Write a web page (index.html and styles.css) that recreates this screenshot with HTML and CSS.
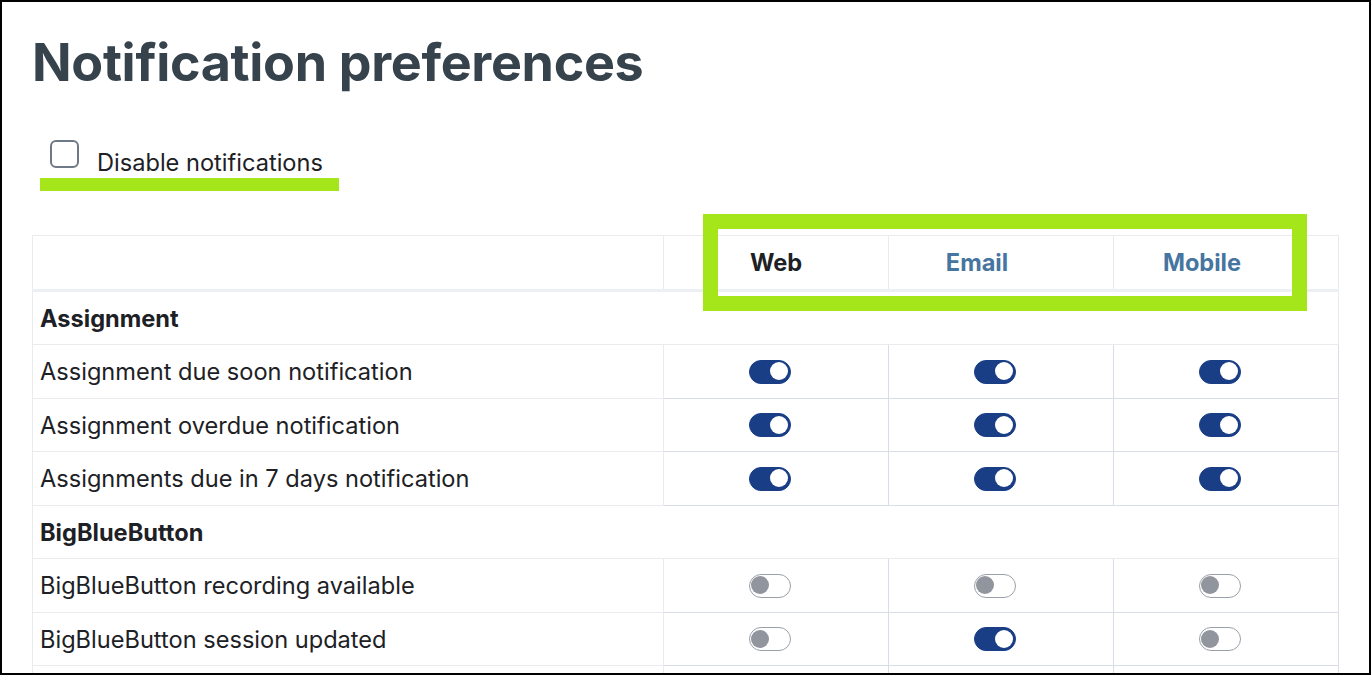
FILE: index.html
```html
<!DOCTYPE html>
<html lang="en">
<head>
<meta charset="utf-8">
<title>Notification preferences</title>
<link rel="stylesheet" href="styles.css">
</head>
<body>
<div class="frame">
  <h2 class="title">Notification preferences</h2>
  <div class="disable">
    <label class="disable-label"><span class="checkbox"></span><span class="disable-text">Disable notifications</span></label>
    <div class="underline"></div>
  </div>
  <div class="table-wrap">
    <table class="prefs">
      <colgroup><col class="c-name"><col class="c-proc"><col class="c-proc"><col class="c-proc"></colgroup>
      <thead>
        <tr><th class="h-name"></th><th class="h-web">Web</th><th class="h-link">Email</th><th class="h-link">Mobile</th></tr>
      </thead>
      <tbody>
        <tr class="section"><td colspan="4">Assignment</td></tr>
        <tr><td class="name">Assignment due soon notification</td><td class="tg"><span class="switch on"></span></td><td class="tg"><span class="switch on"></span></td><td class="tg"><span class="switch on"></span></td></tr>
        <tr><td class="name">Assignment overdue notification</td><td class="tg"><span class="switch on"></span></td><td class="tg"><span class="switch on"></span></td><td class="tg"><span class="switch on"></span></td></tr>
        <tr><td class="name">Assignments due in 7 days notification</td><td class="tg"><span class="switch on"></span></td><td class="tg"><span class="switch on"></span></td><td class="tg"><span class="switch on"></span></td></tr>
        <tr class="section"><td colspan="4">BigBlueButton</td></tr>
        <tr><td class="name">BigBlueButton recording available</td><td class="tg"><span class="switch"></span></td><td class="tg"><span class="switch"></span></td><td class="tg"><span class="switch"></span></td></tr>
        <tr><td class="name">BigBlueButton session updated</td><td class="tg"><span class="switch"></span></td><td class="tg"><span class="switch on"></span></td><td class="tg"><span class="switch"></span></td></tr>
        <tr><td class="name">&nbsp;</td><td class="tg"></td><td class="tg"></td><td class="tg"></td></tr>
      </tbody>
    </table>
    <div class="highlight"></div>
  </div>
</div>
</body>
</html>
```

FILE: styles.css
```css
html, body {
  margin: 0;
  padding: 0;
  background: #fff;
}
body {
  font-family: Inter, "Noto Sans", sans-serif;
  color: #1d2125;
}
.frame {
  box-sizing: border-box;
  width: 1371px;
  height: 675px;
  border: 2px solid #000;
  overflow: hidden;
  padding: 0 0 0 30px;
  position: relative;
}
.title {
  margin: 30px 0 0 0;
  font-size: 52px;
  line-height: 1.2;
  font-weight: 700;
  color: #37434c;
  letter-spacing: -0.32px;
}
.disable {
  margin-top: 46px;
  display: inline-flex;
  flex-direction: column;
  align-items: flex-start;
}
.disable-label {
  display: flex;
  align-items: flex-start;
  margin-left: 18px;
}
.checkbox {
  box-sizing: border-box;
  width: 29px;
  height: 28px;
  border: 2px solid #6f7886;
  border-radius: 6px;
  background: #fff;
  flex: none;
}
.disable-text {
  font-size: 23.6px;
  line-height: 27px;
  margin: 9px 0 0 18px;
}
.underline {
  width: 299px;
  height: 13px;
  background: #a5e61b;
  margin: 2px 0 0 8px;
}
.table-wrap {
  position: relative;
  margin-top: 44px;
}
.prefs {
  border-collapse: collapse;
  table-layout: fixed;
  width: 1306px;
  font-size: 23.6px;
}
.c-name { width: 631px; }
.c-proc { width: 225px; }
.prefs th, .prefs td {
  border: 1px solid #e9ebef;
  padding: 0 7px;
  height: 52.5px;
  vertical-align: middle;
}
.prefs thead th {
  border-bottom: 3px solid #eceff3;
  font-weight: 700;
  text-align: center;
}
.h-web { color: #1d2125; }
.prefs thead th.h-link {
  color: #46759f;
  padding-right: 55px;
}
.section td {
  font-weight: 700;
  text-align: left;
}
.name {
  text-align: left;
}
.prefs td.tg {
  border: 1px solid #d9dde8;
  text-align: center;
  font-size: 0;
  padding-right: 20px;
}
.switch {
  display: inline-block;
  box-sizing: border-box;
  position: relative;
  width: 42px;
  height: 24px;
  border-radius: 12px;
  border: 1.5px solid #9aa0a9;
  background: #fff;
  vertical-align: middle;
}
.switch::after {
  content: "";
  position: absolute;
  left: 1.5px;
  top: 1.5px;
  width: 18px;
  height: 18px;
  border-radius: 50%;
  background: #91959d;
}
.switch.on {
  background: #1a3e86;
  border-color: #1a3e86;
}
.switch.on::after {
  left: auto;
  right: 1.5px;
  background: #fff;
}
.highlight {
  position: absolute;
  left: 671px;
  top: -21px;
  width: 604px;
  height: 97px;
  box-sizing: border-box;
  border: 15px solid #a5e61b;
  pointer-events: none;
}
```
